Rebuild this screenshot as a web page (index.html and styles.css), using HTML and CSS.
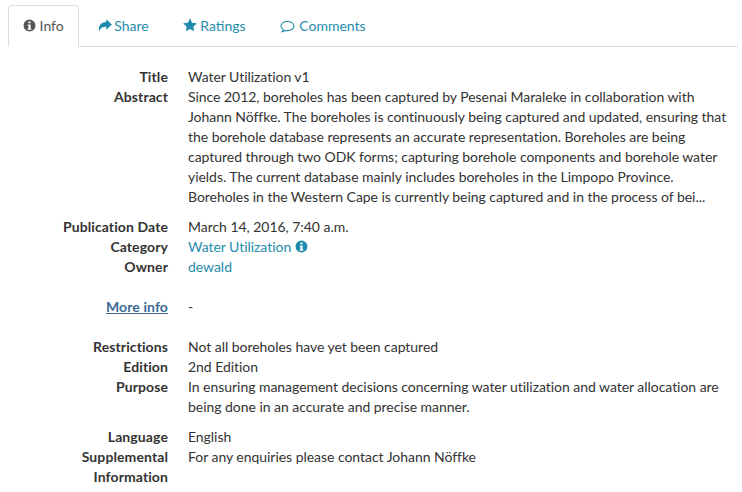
FILE: index.html
```html
<!DOCTYPE html>
<html lang="en">
<head>
<meta charset="utf-8">
<title>Water Utilization v1</title>
<link rel="stylesheet" href="styles.css">
</head>
<body>
<ul class="tabs">
  <li class="tab active"><a><svg class="ic info-ic" viewBox="0 0 24 24"><path fill-rule="evenodd" d="M12 1a11 11 0 1 0 0 22 11 11 0 0 0 0-22zM10 4.500h4v3.500h-4zM9 10h5v7.500h1.500V20h-7v-2.500H10V12.500H9z"/></svg> Info</a></li>
  <li class="tab"><a><svg class="ic wide share" viewBox="0 0 24 24"><path d="M14 2l10 9-10 9v-5C8 15 4 16.500 2 23 0 14 5 7 14 7z"/></svg> Share</a></li>
  <li class="tab"><a><svg class="ic wide" viewBox="0 0 24 24"><path d="M12 .5l3.500 7.500 8.200 1.100-6 5.700 1.500 8.100-7.200-4-7.200 4 1.500-8.100-6-5.700L8.500 8z"/></svg> Ratings</a></li>
  <li class="tab"><a><svg class="ic comment" viewBox="0 0 24 24"><path fill="none" stroke="currentColor" stroke-width="1.800" d="M12 4c5.800 0 10.500 3.300 10.500 7.300S17.800 18.600 12 18.600c-1 0-2-.1-3-.3-1.500 1.300-3.500 2-5.500 2.200 1-1 1.700-2.300 1.800-3.600-2.300-1.300-3.800-3.300-3.800-5.600C1.500 7.300 6.200 4 12 4z"/></svg> Comments</a></li>
</ul>
<dl class="info">
  <dt>Title</dt><dd>Water Utilization v1</dd>
  <dt>Abstract</dt><dd>Since 2012, boreholes has been captured by Pesenai Maraleke in collaboration with Johann Nöffke. The boreholes is continuously being captured and updated, ensuring that the borehole database represents an accurate representation. Boreholes are being captured through two ODK forms; capturing borehole components and borehole water yields. The current database mainly includes boreholes in the Limpopo Province. Boreholes in the Western Cape is currently being captured and in the process of bei...</dd>
  <dt class="gap-s"></dt><dd class="gap-s"></dd>
  <dt>Publication Date</dt><dd>March 14, 2016, 7:40 a.m.</dd>
  <dt>Category</dt><dd><a>Water Utilization</a> <svg class="ic info-ic" viewBox="0 0 24 24"><path fill-rule="evenodd" d="M12 1a11 11 0 1 0 0 22 11 11 0 0 0 0-22zM10 4.500h4v3.500h-4zM9 10h5v7.500h1.500V20h-7v-2.500H10V12.500H9z"/></svg></dd>
  <dt>Owner</dt><dd><a>dewald</a></dd>
  <dt class="gap"></dt><dd class="gap"></dd>
  <dt><a class="more">More info</a></dt><dd>-</dd>
  <dt class="gap"></dt><dd class="gap"></dd>
  <dt>Restrictions</dt><dd>Not all boreholes have yet been captured</dd>
  <dt>Edition</dt><dd>2nd Edition</dd>
  <dt>Purpose</dt><dd>In ensuring management decisions concerning water utilization and water allocation are being done in an accurate and precise manner.</dd>
  <dt class="gap-s"></dt><dd class="gap-s"></dd>
  <dt>Language</dt><dd>English</dd>
  <dt>Supplemental Information</dt><dd>For any enquiries please contact Johann Nöffke</dd>
</dl>
</body>
</html>
```
FILE: styles.css
```css
html, body {
  margin: 0;
  padding: 0;
  background: #fff;
}
body {
  width: 742px;
  height: 492px;
  overflow: hidden;
  box-sizing: border-box;
  padding: 5px 4px 0 8px;
  font-family: Lato, sans-serif;
  font-size: 14px;
  line-height: 20px;
  color: #333;
}
.tabs {
  display: flex;
  margin: 0;
  padding: 0;
  list-style: none;
  border-bottom: 1px solid #ddd;
  height: 41px;
}
.tab {
  margin-bottom: -1px;
  margin-right: 4px;
}
.tab a {
  display: block;
  height: 42px;
  box-sizing: border-box;
  padding: 10px 14px;
  border: 1px solid transparent;
  border-radius: 4px 4px 0 0;
  color: #1f8cad;
}
.tab.active a {
  color: #555;
  background: #fff;
  border-color: #ddd #ddd #fff;
}
.ic {
  fill: currentColor;
}
.info-ic {
  width: 13px;
  height: 13px;
  vertical-align: -1px;
}
.wide {
  width: 14px;
  height: 14px;
  vertical-align: -1px;
}
.share {
  margin-right: -1px;
}
.comment {
  width: 15px;
  height: 15px;
  vertical-align: -3px;
  margin-right: 1px;
}
.info {
  display: grid;
  grid-template-columns: 160px 1fr;
  column-gap: 20px;
  margin: 20px 0 0;
  padding-right: 10px;
}
dt {
  font-weight: 700;
  text-align: right;
  letter-spacing: 0.1px;
}
dd {
  margin: 0;
  letter-spacing: -0.04px;
}
.gap {
  height: 20px;
}
.gap-s {
  height: 10px;
}
dd a, dd .ic {
  color: #1f8cad;
}
.more {
  color: #3b6a94;
  text-decoration: underline;
}
```
